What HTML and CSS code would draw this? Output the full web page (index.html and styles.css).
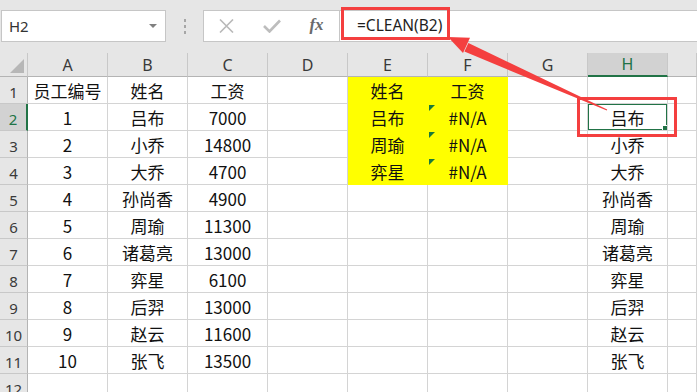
FILE: index.html
```html
<!DOCTYPE html>
<html lang="zh-CN">

<head>
    <meta charset="UTF-8">
    <meta name="viewport" content="width=device-width, initial-scale=1.0">
    <title>CLEAN 函数</title>
    <link rel="stylesheet" href="styles.css">
</head>

<body>
    <!-- Name box + formula bar -->
    <div class="topbar">
        <div class="namebox">
            <span>H2</span>
            <span class="caret"></span>
        </div>
        <div class="grip"><i></i><i></i><i></i></div>
        <div class="fxbox">
            <span class="fxbtn">
                <svg width="15" height="14" viewBox="0 0 15 14"><path d="M1 0.5 L14 13.5 M14 0.5 L1 13.5" stroke="#b9b9b9" stroke-width="1.6" fill="none"/></svg>
            </span>
            <span class="fxbtn">
                <svg width="18" height="14" viewBox="0 0 18 14"><path d="M1 7 L6.5 12.5 L17 1.5" stroke="#bdbdbd" stroke-width="2.6" fill="none"/></svg>
            </span>
            <span class="fxbtn fx">fx</span>
        </div>
        <div class="formula">=CLEAN(B2)</div>
    </div>

    <!-- Worksheet -->
    <table class="sheet">
        <thead>
            <tr>
                <th class="corner"><span class="corner-tri"></span></th>
                <th class="col">A</th>
                <th class="col">B</th>
                <th class="col">C</th>
                <th class="col">D</th>
                <th class="col">E</th>
                <th class="col">F</th>
                <th class="col">G</th>
                <th class="col sel">H</th>
                <th class="col last"></th>
            </tr>
        </thead>
        <tbody>
            <tr><th>1</th><td>员工编号</td><td>姓名</td><td>工资</td><td></td><td class="hl">姓名</td><td class="hl">工资</td><td></td><td></td><td></td></tr>
            <tr><th class="sel">2</th><td>1</td><td>吕布</td><td>7000</td><td></td><td class="hl">吕布</td><td class="hl err">#N/A</td><td></td><td class="active">吕布</td><td></td></tr>
            <tr><th>3</th><td>2</td><td>小乔</td><td>14800</td><td></td><td class="hl">周瑜</td><td class="hl err">#N/A</td><td></td><td>小乔</td><td></td></tr>
            <tr><th>4</th><td>3</td><td>大乔</td><td>4700</td><td></td><td class="hl">弈星</td><td class="hl err">#N/A</td><td></td><td>大乔</td><td></td></tr>
            <tr><th>5</th><td>4</td><td>孙尚香</td><td>4900</td><td></td><td></td><td></td><td></td><td>孙尚香</td><td></td></tr>
            <tr><th>6</th><td>5</td><td>周瑜</td><td>11300</td><td></td><td></td><td></td><td></td><td>周瑜</td><td></td></tr>
            <tr><th>7</th><td>6</td><td>诸葛亮</td><td>13000</td><td></td><td></td><td></td><td></td><td>诸葛亮</td><td></td></tr>
            <tr><th>8</th><td>7</td><td>弈星</td><td>6100</td><td></td><td></td><td></td><td></td><td>弈星</td><td></td></tr>
            <tr><th>9</th><td>8</td><td>后羿</td><td>13000</td><td></td><td></td><td></td><td></td><td>后羿</td><td></td></tr>
            <tr><th>10</th><td>9</td><td>赵云</td><td>11600</td><td></td><td></td><td></td><td></td><td>赵云</td><td></td></tr>
            <tr><th>11</th><td>10</td><td>张飞</td><td>13500</td><td></td><td></td><td></td><td></td><td>张飞</td><td></td></tr>
            <tr><th>12</th><td></td><td></td><td></td><td></td><td></td><td></td><td></td><td></td><td></td></tr>
        </tbody>
    </table>

    <!-- Red annotation: boxes and arrow -->
    <svg class="annot" width="697" height="392" viewBox="0 0 697 392">
        <rect x="342.5" y="8.5" width="106" height="30" fill="none" stroke="#f43f3f" stroke-width="3"/>
        <rect x="578.5" y="98.5" width="97" height="37" fill="none" stroke="#f43f3f" stroke-width="3"/>
        <polygon points="607.2,109.6 580.5,96.8 468.4,43 464.4,51.6 579.5,99.2 606.8,110.4" fill="#f43f3f"/>
        <polygon points="448,37 470,37.8 463,53" fill="#f43f3f"/>
    </svg>
</body>

</html>
```

FILE: styles.css
```css
body {
    margin: 0;
    width: 697px;
    height: 392px;
    overflow: hidden;
    position: relative;
    background: #fff;
    font-family: "Noto Sans CJK SC", sans-serif;
}

/* top bar */
.topbar {
    height: 53px;
    box-sizing: border-box;
    padding-top: 10px;
    background: #e6e6e6;
    display: flex;
    align-items: flex-start;
}

.namebox {
    margin-left: 1px;
    width: 165px;
    height: 32px;
    box-sizing: border-box;
    background: #fff;
    border: 1px solid #c6c6c6;
    display: flex;
    align-items: center;
    justify-content: space-between;
    padding: 0 8px 0 7px;
    font: 15px "Noto Sans", sans-serif;
    color: #333;
}

.caret {
    width: 0;
    height: 0;
    border-left: 4px solid transparent;
    border-right: 4px solid transparent;
    border-top: 4px solid #808080;
}

.grip {
    width: 37px;
    height: 32px;
    display: flex;
    flex-direction: column;
    align-items: center;
    justify-content: center;
    gap: 3px;
}

.grip i {
    width: 2px;
    height: 3px;
    background: #a6a6a6;
}

.fxbox {
    width: 137px;
    height: 32px;
    box-sizing: border-box;
    background: #fff;
    border: 1px solid #c6c6c6;
    display: flex;
}

.fxbtn {
    width: 45px;
    display: flex;
    align-items: center;
    justify-content: center;
}

.fx {
    font: italic bold 17px "Liberation Serif", serif;
    color: #6a6a6a;
    padding-bottom: 2px;
}

.formula {
    flex: 1;
    height: 32px;
    box-sizing: border-box;
    margin-left: -1px;
    background: #fff;
    border: 1px solid #c6c6c6;
    border-right: none;
    padding-left: 17px;
    font: 15.5px "Noto Sans", sans-serif;
    line-height: 29px;
    color: #1e1e1e;
}

/* sheet grid */
.sheet {
    width: 697px;
    table-layout: fixed;
    border-collapse: separate;
    border-spacing: 0;
    font-size: 17px;
    color: #111;
}

.sheet th,
.sheet td {
    box-sizing: border-box;
    padding: 0;
    height: 27px;
    border-right: 1px solid #d4d4d4;
    border-bottom: 1px solid #d4d4d4;
    text-align: center;
    vertical-align: middle;
    white-space: nowrap;
    overflow: hidden;
    font-weight: normal;
}

.sheet td {
    padding-top: 1px;
}

.sheet thead th {
    height: 23px;
    width: 80px;
    background: #e6e6e6;
    border-right-color: #c8c8c8;
    border-bottom-color: #b4b4b4;
    font: 16px "Noto Sans", sans-serif;
    color: #3a3a3a;
}

.sheet thead th.corner {
    width: 28px;
    position: relative;
}

.sheet thead th.last {
    width: 29px;
}

.corner-tri {
    position: absolute;
    right: 3px;
    bottom: 3px;
    width: 0;
    height: 0;
    border-left: 14px solid transparent;
    border-bottom: 14px solid #b7b7b7;
}

.sheet tbody th {
    background: #e6e6e6;
    border-right-color: #b4b4b4;
    border-bottom-color: #c8c8c8;
    font: 15px "Noto Sans", sans-serif;
    color: #3a3a3a;
    padding-top: 3px;
}

.sheet thead th.sel {
    background: #d2d2d2;
    color: #217346;
    border-bottom: 2px solid #217346;
}

.sheet tbody th.sel {
    background: #d2d2d2;
    color: #217346;
    border-right: 2px solid #217346;
}

.hl {
    background: #ffff00;
    border-color: #ffff00 !important;
}

.err {
    position: relative;
}

.err::before {
    content: "";
    position: absolute;
    left: 1px;
    top: 1px;
    border-top: 6px solid #1a7a3a;
    border-right: 6px solid transparent;
}

.active {
    position: relative;
}

.active::after {
    content: "";
    position: absolute;
    left: -1px;
    top: -1px;
    right: -1px;
    bottom: -1px;
    border: 2px solid #217346;
}

.active::before {
    content: "";
    position: absolute;
    right: -3px;
    bottom: -3px;
    width: 6px;
    height: 6px;
    background: #217346;
    border: 1px solid #fff;
    z-index: 1;
}

/* annotation overlay */
.annot {
    position: absolute;
    left: 0;
    top: 0;
    pointer-events: none;
}
```
